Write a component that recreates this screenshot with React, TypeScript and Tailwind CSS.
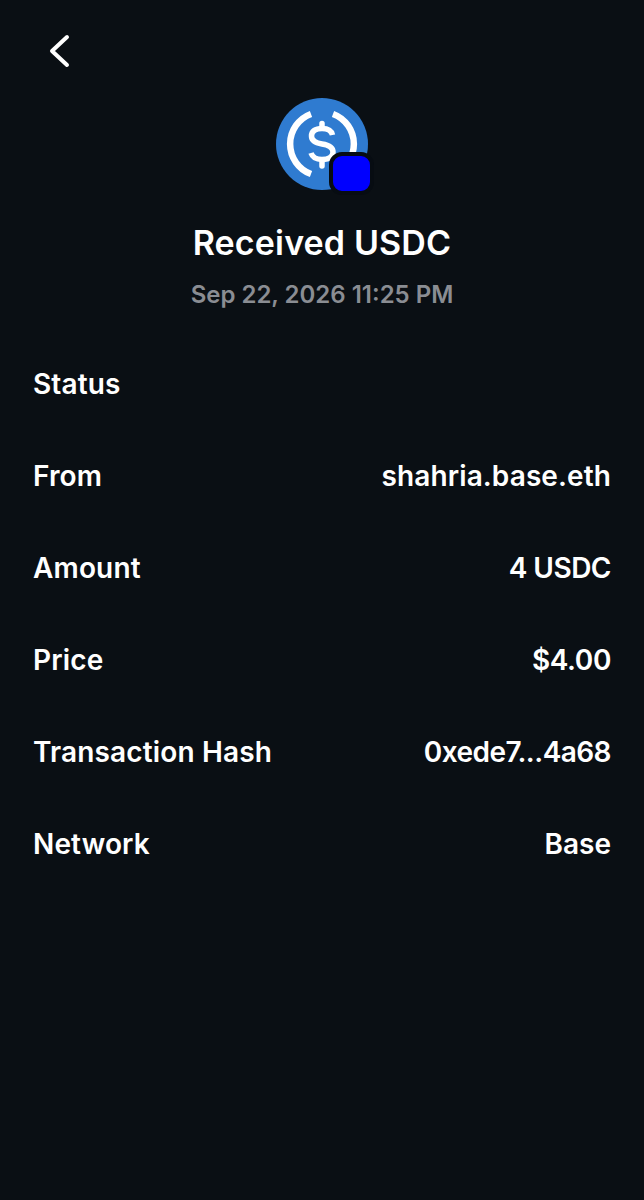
const ROWS = [
  { label: "Status", value: "", valueClass: "" },
  { label: "From", value: "shahria.base.eth", valueClass: "tracking-[0.1px]" },
  { label: "Amount", value: "4 USDC", valueClass: "tracking-[-0.5px]" },
  { label: "Price", value: "$4.00", valueClass: "tracking-[-0.4px]" },
  { label: "Transaction Hash", value: "0xede7...4a68", valueClass: "tracking-[-0.55px]" },
  { label: "Network", value: "Base", valueClass: "" },
]

function UsdcIcon() {
  return (
    <div className="relative w-[92px] h-[92px]">
      <svg width="92" height="92" viewBox="0 0 92 92">
        <circle cx="46" cy="46" r="46" fill="#2f7bd0" />
        <path d="M35 16 A32 32 0 0 0 35 76" fill="none" stroke="#fff" strokeWidth="6.500" />
        <path d="M57 16 A32 32 0 0 1 57 76" fill="none" stroke="#fff" strokeWidth="6.500" />
        <path d="M56.500 37 C55.500 32.500 52 30.500 46 30.500 C39 30.500 35.500 33.500 35.500 38 C35.500 43 39.500 45 46 46 C52.500 47 57 49 57 54 C57 59 53 61.500 46 61.500 C40 61.500 36.500 59.500 35 55" fill="none" stroke="#fff" strokeWidth="5.500" />
        <path d="M46 25.500 V30 M46 62 V68" fill="none" stroke="#fff" strokeWidth="5.500" strokeLinecap="round" />
      </svg>
      <div className="absolute left-[53px] top-[54px] w-[45px] h-[43px] rounded-[13px] bg-[#0000ff] border-[4px] border-[#070c12]" />
    </div>
  )
}

export default function App() {
  return (
    <div
      className="w-[644px] h-[1200px] bg-[#0a0f14] text-white overflow-hidden"
      style={{ fontFamily: "Inter, 'Liberation Sans', sans-serif" }}
    >
      <div className="h-[98px] pl-[46px] pt-[31px]">
        <svg width="28" height="40" viewBox="0 0 28 40" fill="none">
          <path d="M21 6 L6 20 L21 34" stroke="#fff" strokeWidth="4" strokeLinecap="round" strokeLinejoin="round" />
        </svg>
      </div>

      <div className="flex flex-col items-center">
        <UsdcIcon />
        <h1 className="mt-[31px] text-[34px] leading-[44px] font-semibold tracking-[0.15px]">Received USDC</h1>
        <p className="mt-[14px] text-[24px] leading-[32px] font-semibold text-[#8a8d93]">Sep 22, 2026 11:25 PM</p>
      </div>

      <div className="mt-[27px] px-[33px]">
        {ROWS.map((row) => (
          <div key={row.label} className="h-[92px] flex items-center justify-between text-[28px] font-semibold">
            <span className="tracking-[0.15px]">{row.label}</span>
            <span className={row.valueClass}>{row.value}</span>
          </div>
        ))}
      </div>
    </div>
  )
}
